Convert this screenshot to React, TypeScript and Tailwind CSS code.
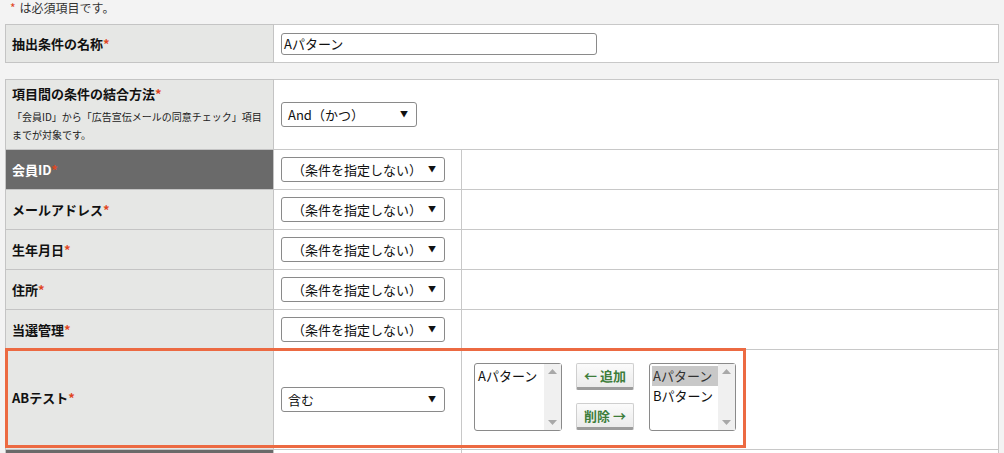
import React from "react";

const FONT = { fontFamily: '"Noto Sans CJK JP", "Noto Sans", sans-serif' };

function Req() {
  return <span className="text-[#e0461f]">*</span>;
}

function Sel({ text, w, pl }: { text: string; w: string; pl: string }) {
  return (
    <div className={`relative h-[25px] ${w} rounded-[3px] border border-[#8a8a8a] bg-white`}>
      <div className={`flex h-full items-center ${pl} text-[13px] leading-[18px] text-[#111]`}>{text}</div>
      <span className="absolute right-[8px] top-[6px] text-[8px] leading-[10px] text-[#111]">▼</span>
    </div>
  );
}

function ScrollTrack() {
  return (
    <div className="flex w-[17px] flex-col items-center justify-between bg-[#f0f0f0] py-[5px]">
      <svg width="9" height="5" viewBox="0 0 9 5"><path d="M0 5 L4.5 0 L9 5 Z" fill="#a8a8a8" /></svg>
      <svg width="9" height="5" viewBox="0 0 9 5"><path d="M0 0 L4.5 5 L9 0 Z" fill="#a8a8a8" /></svg>
    </div>
  );
}

function Btn({ children }: { children: React.ReactNode }) {
  return (
    <div className="flex h-[27px] w-[58px] items-center justify-center rounded-[2px] border border-[#cfcfcf] border-b-[3px] border-b-[#9c9c9c] bg-gradient-to-b from-[#fbfbfb] to-[#ebebeb] text-[13px] font-bold text-[#3d7d3a]">
      {children}
    </div>
  );
}

const labelCls = "bg-[#e6e7e5] border border-[#c4c4c4] pl-[6px] text-[13px] font-bold text-[#111] align-middle";
const darkLabelCls = "bg-[#6a6a6a] border border-[#c4c4c4] pl-[6px] text-[13px] font-bold text-white align-middle";
const valCls = "bg-white border border-[#c8c8c8] pl-[7px] align-middle";

const rows = ["会員ID", "メールアドレス", "生年月日", "住所", "当選管理"];

export default function App() {
  return (
    <div className="relative min-h-screen bg-[#f3f3f3]" style={FONT}>
      <p className="flex h-[24px] items-start pl-[10px] pt-0 text-[12px] leading-[16px] text-[#333]">
        <Req />
        <span className="ml-[4px]">は必須項目です。</span>
      </p>
      <table className="ml-[5px] w-[994px] border-collapse">
        <tbody>
          <tr className="h-[38px]">
            <td className={`${labelCls} w-[268px]`}>
              抽出条件の名称<Req />
            </td>
            <td className={valCls}>
              <div className="flex h-[22px] w-[316px] items-center rounded-[3px] border border-[#8a8a8a] bg-white pl-[2px] text-[13px] text-[#111]">
                Aパターン
              </div>
            </td>
          </tr>
        </tbody>
      </table>
      <div className="h-[16px]" />
      <table className="ml-[5px] w-[994px] border-collapse">
        <tbody>
          <tr className="h-[70px]">
            <td className={`${labelCls} w-[268px]`}>
              <div className="leading-[18px]">
                項目間の条件の結合方法<Req />
              </div>
              <div className="mt-[5px] pr-[4px] text-[10px] font-normal leading-[18px] text-[#222]">
                「会員ID」から「広告宣伝メールの同意チェック」項目までが対象です。
              </div>
            </td>
            <td className={valCls} colSpan={2}>
              <Sel text="And（かつ）" w="w-[136px]" pl="pl-[6px]" />
            </td>
          </tr>
          {rows.map((r, i) => (
            <tr key={r} className="h-[40px]">
              <td className={i === 0 ? darkLabelCls : labelCls}>
                {r}
                <Req />
              </td>
              <td className={`${valCls} w-[188px]`}>
                <Sel text="（条件を指定しない）" w="w-[164px]" pl="pl-[10px]" />
              </td>
              <td className="border border-[#c8c8c8] bg-white" />
            </tr>
          ))}
          <tr className="h-[100px]">
            <td className={`${labelCls} pb-[3px]`}>
              ABテスト<Req />
            </td>
            <td className={valCls}>
              <Sel text="含む" w="w-[164px]" pl="pl-[6px]" />
            </td>
            <td className="border border-[#c8c8c8] bg-white pl-[12px] pt-[13px] align-top">
              <div className="flex items-start">
                <div className="flex h-[68px] w-[88px] rounded-[3px] border border-[#8a8a8a] bg-white">
                  <div className="flex-1 pl-[3px] pt-[2px] text-[13px] leading-[20px] text-[#111]">Aパターン</div>
                  <ScrollTrack />
                </div>
                <div className="ml-[14px] flex flex-col gap-[13px]">
                  <Btn>← 追加</Btn>
                  <Btn>削除 →</Btn>
                </div>
                <div className="ml-[15px] flex h-[68px] w-[87px] rounded-[3px] border border-[#8a8a8a] bg-white">
                  <div className="flex-1 pl-[2px] pt-[2px] text-[13px] leading-[20px]">
                    <div className="bg-[#c8c8c8] pl-[1px] text-[#333]">Aパターン</div>
                    <div className="pl-[1px] text-[#111]">Bパターン</div>
                  </div>
                  <ScrollTrack />
                </div>
              </div>
            </td>
          </tr>
          <tr className="h-[40px]">
            <td className={darkLabelCls} />
            <td className={valCls} />
            <td className="border border-[#c8c8c8] bg-white" />
          </tr>
        </tbody>
      </table>
      <div className="pointer-events-none absolute left-[5px] top-[348px] h-[100px] w-[741px] border-[3px] border-[#ec6a42]" />
    </div>
  );
}
